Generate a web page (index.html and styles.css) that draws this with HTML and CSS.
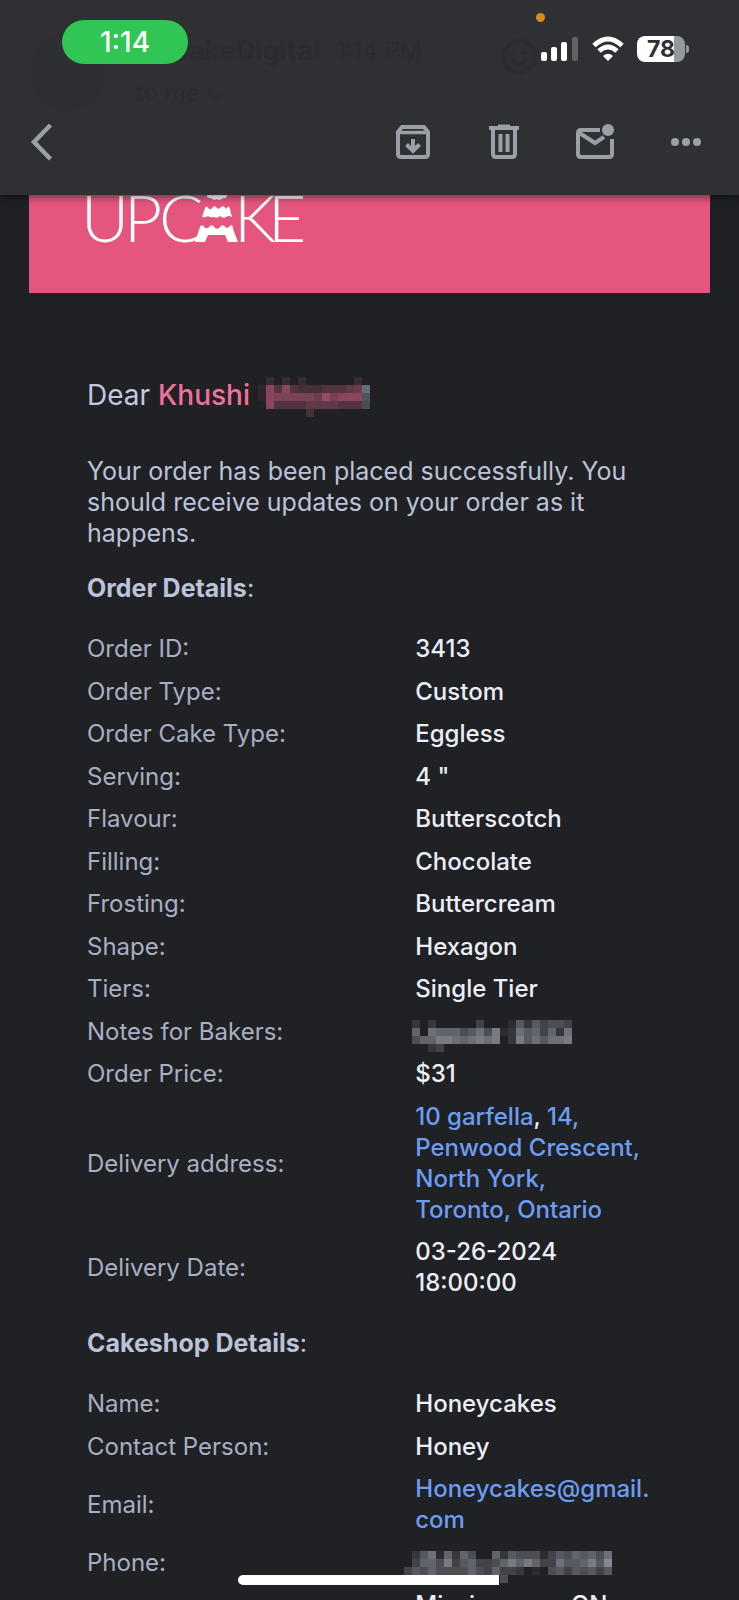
FILE: index.html
```html
<!DOCTYPE html>
<html lang="en">
<head>
<meta charset="utf-8">
<meta name="viewport" content="width=device-width, initial-scale=1">
<title>Upcake order confirmation</title>
<link rel="stylesheet" href="styles.css">
</head>
<body>
<div class="screen">
  <header class="header">
    <div class="sender" aria-hidden="true">
      <span class="sender-avatar"></span>
      <div class="sender-text">
        <div class="sender-line"><strong>UpcakeDigital</strong><span>1:14 PM</span></div>
        <div class="sender-to">to me ⌄</div>
      </div>
      <svg class="sender-smile" width="38" height="38" viewBox="0 0 38 38"><circle cx="19" cy="19" r="16"/><path d="M12 22q7 8 14 0M13 14v2M25 14v2"/></svg>
    </div>
    <div class="status">
      <span class="clock">1:14</span>
      <span class="mic-dot"></span>
      <div class="indicators">
        <svg width="38" height="26" viewBox="0 0 38 26" role="img" aria-label="Signal">
          <g fill="#fff"><rect x="0" y="16" width="6" height="9" rx="2"/><rect x="10" y="11" width="6" height="14" rx="2"/><rect x="20" y="6" width="6" height="19" rx="2"/></g>
          <rect x="31" y="1" width="6" height="24" rx="2" fill="#626366"/>
        </svg>
        <svg width="32" height="26" viewBox="0 0 32 26" role="img" aria-label="Wi-Fi">
          <g fill="none" stroke="#fff" stroke-width="5"><path d="M2 9.500Q16 -3.500 30 9.500"/><path d="M7 15Q16 7 25 15"/></g>
          <path d="M11 20Q16 15.500 21 20L16 25Z" fill="#fff"/>
        </svg>
        <span class="battery"><span class="battery-level">78</span></span>
      </div>
    </div>
    <nav class="toolbar">
      <button class="tool back" aria-label="Back"><svg width="26" height="40" viewBox="0 0 26 40"><path d="M21.500 3L5 20L21.500 37" fill="none" stroke="#9b9fa6" stroke-width="4.500"/></svg></button>
      <button class="tool" aria-label="Archive"><svg width="36" height="36" viewBox="0 0 36 36" fill="none" stroke="#9b9fa6" stroke-width="4"><path d="M3 8L7 3H29L33 8V30Q33 33 30 33H6Q3 33 3 30Z"/><path d="M3 8.500H33" stroke-width="3.500"/><path d="M18 15V26M11.500 20.500L18 27L24.500 20.500"/></svg></button>
      <button class="tool" aria-label="Delete"><svg width="36" height="36" viewBox="0 0 36 36" fill="none" stroke="#9b9fa6" stroke-width="4"><path d="M3 4H33M12 2.500H24"/><path d="M7 4V30Q7 33 10 33H26Q29 33 29 30V4"/><path d="M14.500 10V28M21.500 10V28"/></svg></button>
      <button class="tool" aria-label="Mark unread"><svg width="40" height="38" viewBox="0 0 40 38"><path d="M25 7H6Q3 7 3 10V31Q3 34 6 34H34Q37 34 37 31V16M3 9L20 20L29 14" fill="none" stroke="#9b9fa6" stroke-width="4"/><circle cx="33" cy="7" r="6" fill="#9b9fa6"/></svg></button>
      <button class="tool" aria-label="More"><svg width="32" height="10" viewBox="0 0 32 10" fill="#9b9fa6"><circle cx="5" cy="5" r="4"/><circle cx="16" cy="5" r="4"/><circle cx="27" cy="5" r="4"/></svg></button>
    </nav>
  </header>

  <main class="mail">
    <div class="banner">
      <svg class="logo" width="230" height="50" viewBox="0 0 230 50" role="img" aria-label="Upcake">
        <g class="logo-text"><text x="1" y="47">U</text><text x="44" y="47">P</text><text x="79" y="47">C</text><text x="154" y="47">K</text><text x="188" y="47">E</text></g>
        <g fill="#fff">
          <path d="M127 0H147Q147 4 143 3Q140 6 137 4Q134 6 131 3Q127 4 127 0Z"/>
          <path d="M122 22L125 13Q127 10 129 14Q131 15 133 12Q135 10 137 13Q139 15 141 12Q144 10 146 14Q149 9 150 14L152 22Q148 20 146 22Q143 24 140 21Q137 24 134 22Q130 23 128 21Q125 23 122 22Z"/>
          <path d="M115 47L120 32Q122 28 125 33Q128 34 130 31Q133 29 135 33Q138 35 141 31Q144 29 146 33Q149 33 151 30Q153 30 153 34L158 47H148L145 40H128L125 47Z"/>
        </g>
      </svg>
    </div>

    <article class="letter">
      <h1 class="greeting"><span>Dear</span> <span class="name">Khushi</span> <svg class="mosaic mosaic-name" width="112" height="24" data-rows="02020200000020|18484333444569|18777776978886|08444455554445|00000030000000" aria-label="Surname hidden" role="img"></svg></h1>
      <p class="intro">Your order has been placed successfully. You should receive updates on your order as it happens.</p>

      <h2 class="section">Order Details<span class="colon">:</span></h2>
      <table class="details">
        <tbody>
        <tr><th scope="row">Order ID:</th><td>3413</td></tr>
        <tr><th scope="row">Order Type:</th><td>Custom</td></tr>
        <tr><th scope="row">Order Cake Type:</th><td>Eggless</td></tr>
        <tr><th scope="row">Serving:</th><td>4 "</td></tr>
        <tr><th scope="row">Flavour:</th><td>Butterscotch</td></tr>
        <tr><th scope="row">Filling:</th><td>Chocolate</td></tr>
        <tr><th scope="row">Frosting:</th><td>Buttercream</td></tr>
        <tr><th scope="row">Shape:</th><td>Hexagon</td></tr>
        <tr><th scope="row">Tiers:</th><td>Single Tier</td></tr>
        <tr><th scope="row">Notes for Bakers:</th><td><svg class="mosaic mosaic-notes" width="160" height="24" data-rows="20200000300015253443|60766645748127563627|46688767878028575778|00230000000000000000" aria-label="Notes hidden" role="img"></svg></td></tr>
        <tr><th scope="row">Order Price:</th><td>$31</td></tr>
        <tr><th scope="row">Delivery address:</th><td><a href="#map">10 garfella</a>, <a href="#map">14,<br>Penwood Crescent,<br>North York,<br>Toronto, Ontario</a></td></tr>
        <tr><th scope="row">Delivery Date:</th><td>03-26-2024<br>18:00:00</td></tr>
        </tbody>
      </table>

      <h2 class="section">Cakeshop Details<span class="colon">:</span></h2>
      <table class="details">
        <tbody>
        <tr><th scope="row">Name:</th><td>Honeycakes</td></tr>
        <tr><th scope="row">Contact Person:</th><td>Honey</td></tr>
        <tr><th scope="row">Email:</th><td><a href="mailto:Honeycakes@gmail.com">Honeycakes@gmail.<br>com</a></td></tr>
        <tr><th scope="row">Phone:</th><td><svg class="mosaic mosaic-phone" width="208" height="24" data-rows="02571626400625444135465647|03664835633468686337556859|35464444643633201045354535|00000000000040000000000000" aria-label="Phone number hidden" role="img"></svg></td></tr>
        <tr><td></td><td>Mississauga, ON</td></tr>
        </tbody>
      </table>
    </article>
  </main>
  <div class="home-indicator"></div>
</div>
<script src="mosaic.js"></script>
</body>
</html>
```
FILE: styles.css
```css
* { box-sizing: border-box; }

body {
  margin: 0;
  background: #202125;
  color: #eceef8;
  font: 25px/31px Inter, "Liberation Sans", sans-serif;
}

.screen {
  position: relative;
  height: 100vh;
  overflow: hidden;
}

/* header */
.header {
  position: relative;
  z-index: 1;
  background: #2f3034;
  box-shadow: 0 2px 8px rgba(0, 0, 0, 0.5);
}

.sender {
  position: absolute;
  inset: 34px 29px auto 30px;
  display: flex;
  gap: 30px;
  color: #2b2c30;
}

.sender-avatar {
  width: 76px;
  height: 76px;
  border-radius: 50%;
  background: #2e2f33;
}

.sender-text {
  flex: 1;
  font-size: 24px;
  line-height: 34px;
}

.sender-line {
  display: flex;
  gap: 16px;
}

.sender-line strong { font-size: 27px; }
.sender-to { padding-top: 8px; }

.sender-smile {
  margin: 4px 172px 0 0;
  fill: none;
  stroke: #2b2c30;
  stroke-width: 4;
}

.status {
  position: relative;
  display: flex;
  justify-content: space-between;
  align-items: flex-start;
  height: 89px;
  padding: 20px 50px 0 62px;
}

.clock {
  width: 126px;
  border-radius: 22px;
  background: #31c553;
  color: #fff;
  font-size: 28px;
  font-weight: 500;
  line-height: 44px;
  text-align: center;
}

.mic-dot {
  position: absolute;
  top: 13px;
  right: 194px;
  width: 9px;
  height: 9px;
  border-radius: 50%;
  background: #d88a1c;
}

.indicators {
  display: flex;
  gap: 13px;
  padding-top: 16px;
}

.battery {
  position: relative;
  width: 48px;
  height: 26px;
  margin-right: 4px;
  border-radius: 8px;
  background: linear-gradient(90deg, #fff 78%, #97989b 78%);
}

.battery::after {
  content: "";
  position: absolute;
  top: 9px;
  right: -4px;
  width: 3px;
  height: 8px;
  border-radius: 0 3px 3px 0;
  background: #97989b;
}

.battery-level {
  display: block;
  color: #2f3034;
  font-size: 23px;
  font-weight: 700;
  line-height: 26px;
  text-align: center;
}

.toolbar {
  display: flex;
  align-items: center;
  gap: 43px;
  height: 106px;
  padding: 0 29px 0 18px;
}

.tool {
  display: flex;
  align-items: center;
  justify-content: center;
  width: 48px;
  height: 48px;
  padding: 0;
  border: 0;
  background: none;
}

.back { margin-right: auto; }

/* mail */
.mail { padding: 0 29px; }

.banner {
  height: 98px;
  padding-left: 51px;
  background: #e5567f;
}

.logo { display: block; }

.logo-text {
  fill: #fff;
  font: 300 66px Lato, sans-serif;
}

.letter { padding: 84px 57px 0 58px; }

.greeting {
  display: flex;
  gap: 8px;
  margin: 0 0 43px;
  color: #c2c8de;
  font-size: 28px;
  font-weight: 400;
  line-height: 36px;
}

.name {
  color: #f0719b;
  font-weight: 500;
}

.intro {
  margin: 0 0 24px;
  color: #bcc3d9;
}

.section {
  margin: 24px 0;
  color: #bcc3d9;
  font-size: 25px;
  font-weight: 700;
}

.colon { font-weight: 400; }

.details {
  width: 100%;
  border-collapse: collapse;
  table-layout: fixed;
}

.details th,
.details td {
  padding: 5px 0 6px;
  font-size: 24px;
  text-align: left;
  vertical-align: middle;
}

.details tr:nth-child(even) > * { padding-top: 6px; }

.details th {
  color: #a9afc2;
  font-weight: 400;
}

.details tr > :first-child { width: 58%; }

.details td {
  font-weight: 500;
  white-space: nowrap;
}

.details a { color: #6c9df2; text-decoration: none; }

/* pixelated blocks over private text */
.mosaic {
  display: block;
  overflow: visible;
  fill: #dde1f0;
}

.mosaic-name { margin-top: 8px; fill: #ff6f9c; }
.mosaic-notes { margin-left: -3px; }
.mosaic-phone { margin-left: -11px; }

.home-indicator {
  position: absolute;
  z-index: 1;
  bottom: 15px;
  left: 238px;
  right: 240px;
  height: 10px;
  border-radius: 5px 0 0 5px;
  background: #fff;
}
```
FILE: mosaic.js
```js
// Each digit is the strength of one 8px block; the first row sits above the text line.
document.querySelectorAll('.mosaic').forEach(function (svg) {
  svg.dataset.rows.split('|').forEach(function (row, y) {
    row.split('').forEach(function (value, x) {
      if (value === '0') return;
      var block = document.createElementNS('http://www.w3.org/2000/svg', 'rect');
      var top = svg.classList.contains('mosaic-name') ? y - 1 : y;
      block.setAttribute('x', x * 8);
      block.setAttribute('y', top * 8);
      block.setAttribute('width', 8);
      block.setAttribute('height', 8);
      block.setAttribute('fill-opacity', value / 17);
      if (svg.classList.contains('mosaic-name') && x === 13) block.setAttribute('fill', '#9db4c4');
      svg.appendChild(block);
    });
  });
});
```
